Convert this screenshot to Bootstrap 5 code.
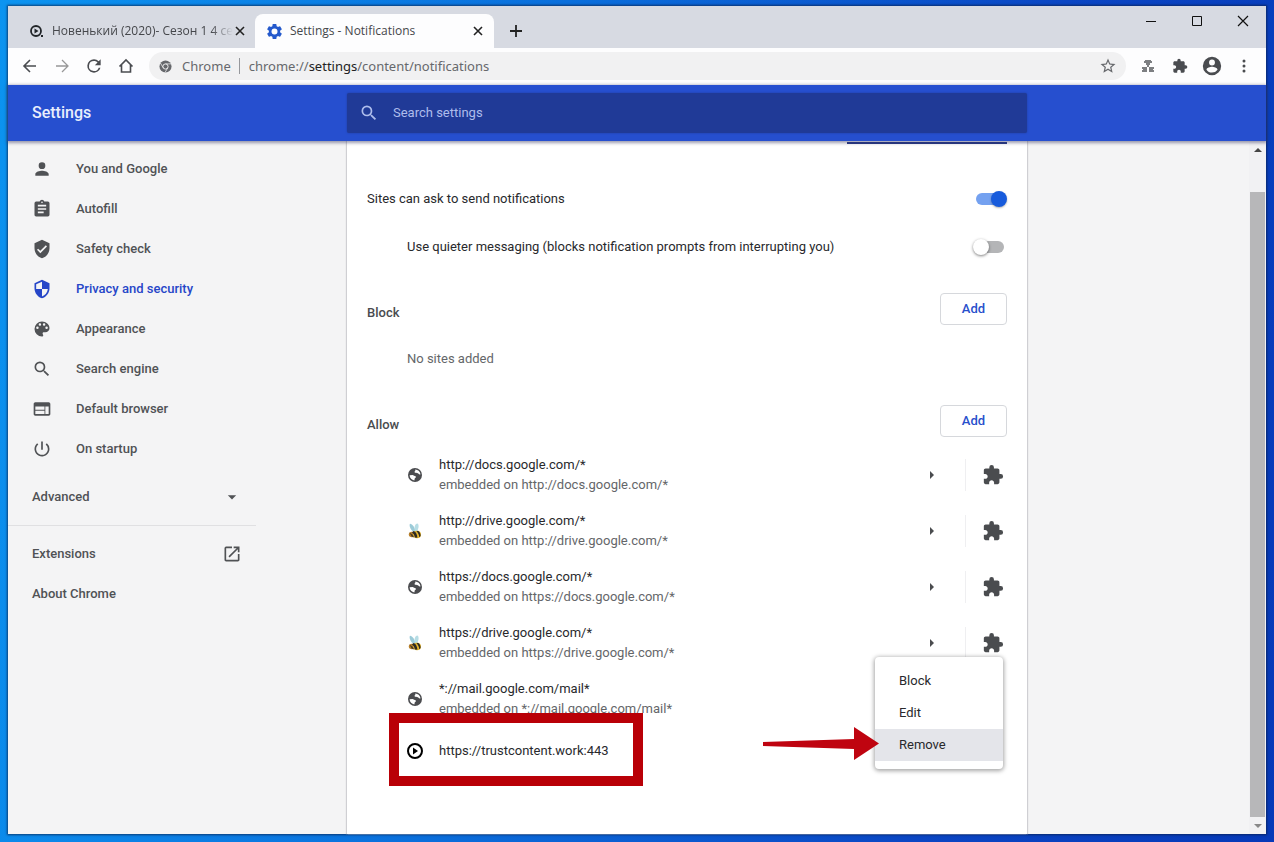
<!DOCTYPE html>
<html lang="en">
<head>
<meta charset="utf-8">
<meta name="viewport" content="width=device-width, initial-scale=1">
<title>Settings - Notifications</title>
<link href="https://cdn.jsdelivr.net/npm/bootstrap@5.3.0/dist/css/bootstrap.min.css" rel="stylesheet">
<style>
body { font-family: Roboto, "Liberation Sans", sans-serif; font-size: 13px; line-height: 20px; color: #28292c; }
.desktop { min-height: 100vh; padding: 6px 8px 8px; background: linear-gradient(100deg, #0c94f0, #0a6fdc 40%, #0b46c4 75%, #0639b8); }
.window { background: #f4f4f5; box-shadow: 0 0 2px 1px rgba(10, 30, 70, .7); }
svg { display: block; fill: currentColor; flex: none; }
button, .plain-link { color: inherit; text-decoration: none; }
.bare { border: 0; background: none; padding: 0; display: flex; align-items: center; justify-content: center; }

/* Tab strip */
.tabstrip { height: 42px; background: #d7dae2; padding: 8px 0 0 14px; }
.browser-tab { height: 34px; font: 12px/18px "Open Sans", "Noto Sans", sans-serif; color: #45474b; }
.browser-tab a { gap: 8px; min-width: 0; }
.tab-idle { width: 233px; padding: 0 9px 0 7px; }
.tab-active { width: 239px; padding: 0 10px 0 12px; background: #fdfdfe; border-radius: 8px 8px 0 0; }
.tab-title { white-space: nowrap; }
.fade-out { -webkit-mask-image: linear-gradient(to right, #000 88%, transparent); mask-image: linear-gradient(to right, #000 88%, transparent); }
.close-btn { width: 12px; height: 12px; color: #222; }
.newtab { width: 28px; height: 28px; margin: 3px 0 0 8px; color: #222; }
.win-btn { width: 46px; height: 30px; margin-top: -8px; color: #111; }

/* Toolbar */
.toolbar { height: 37px; background: #fdfdfe; padding: 0 6px 1px; color: #4a4c50; }
.tool-btn { width: 32px; height: 32px; }
.omnibox { height: 28px; border-radius: 14px; background: #f1f1f2; margin: 0 6px 0 7px; padding: 0 2px 0 10px; font: 13px/20px "Noto Sans", "Open Sans", sans-serif; color: #66686c; min-width: 0; }
.omnibox .site-name { margin-left: 10px; }
.omnibox .sep { width: 1px; height: 16px; background: #96989c; margin: 0 9px 0 8px; }
.omnibox b { font-weight: 400; color: #222; }
.url { white-space: nowrap; overflow: hidden; }

/* Settings header */
.header-bar { background: #264fcf; height: 56px; box-shadow: 0 1px 3px 1px rgba(60, 60, 100, .5); z-index: 2; }
.left-col { flex: 0 0 339px; }
.header-title { font-size: 16px; line-height: 24px; font-weight: 500; color: #e9eefc; padding-left: 24px; }
.main-col { flex: 0 1 680px; min-width: 0; }
.search-box { height: 40px; border-radius: 2px; background: #203a97; color: #aebdec; padding: 0 12px; gap: 14px; box-shadow: 0 0 2px #203a97; }
.search-box input { border: 0; outline: 0; background: none; color: inherit; font-size: 13px; width: 100%; padding: 0; }
.search-box input::placeholder { color: inherit; opacity: 1; }

/* Sidebar */
.side { width: 248px; padding-top: 8px; font-weight: 500; color: #505255; }
.side a, .side .advanced { display: flex; align-items: center; height: 40px; padding: 0 14px 0 24px; color: inherit; text-decoration: none; width: 100%; font-weight: 500; }
.side a.has-icon { gap: 24px; }
.side a.current { color: #2646c8; }
.side .advanced { border: 0; background: none; margin: 8px 0; }
.side .rule { border-top: 1px solid #e0e0e2; margin-bottom: 8px; }

/* Main panel */
.panel { background: #fff; box-shadow: 1px 0 1px #cfcfd3, -1px 0 1px #cfcfd3; padding: 0 20px 48px; }
.field-line { width: 160px; height: 2px; background: #27357c; margin: 1px 0 31px; z-index: 3; }
.setting { height: 48px; padding-right: 3px; }
.indent { padding-left: 40px; }
.toggle { appearance: none; width: 28px; height: 12px; border-radius: 6px; background: #b4b5b7; position: relative; margin: 0; }
.toggle::before { content: ""; position: absolute; top: -2px; left: -3px; width: 16px; height: 16px; border-radius: 50%; background: #fff; box-shadow: 0 1px 3px rgba(0, 0, 0, .5); }
.toggle:checked { background: #74a1f0; }
.toggle:checked::before { left: 15px; background: #175bdc; box-shadow: 0 1px 2px rgba(0, 0, 0, .3); }
.group-head { padding-top: 22px; margin-bottom: 10px; }
.group-head h2 { font-size: 13px; line-height: 24px; font-weight: 500; margin: 0; color: #4a4c4f; }
.add-btn { width: 67px; height: 32px; padding: 0; border: 1px solid #d6d8dc; border-radius: 4px; color: #2850cc; background: #fff; font-size: 13px; font-weight: 500; }
.subtle { color: #646669; }
.site { height: 56px; gap: 16px; }
.site-last { height: 48px; }
.site .vline { width: 1px; height: 32px; background: #efeff1; }
.site .expand { width: 36px; height: 36px; margin-right: -1px; color: #4a4c4f; }
.site .ext { width: 22px; margin-right: 3px; color: #4a4c4f; }
.highlight { position: absolute; left: -18px; top: -14px; bottom: -11px; width: 254px; border: 10px solid #b90007; }
.pointer { position: absolute; right: 128px; top: 0; color: #bf0410; }
.action-menu { position: absolute; right: 4px; bottom: 6px; width: 128px; padding: 8px 0; background: #fff; border-radius: 4px; box-shadow: 0 1px 4px 1px rgba(0, 0, 0, .35); }
.action-menu button { display: block; width: 100%; height: 32px; border: 0; background: none; text-align: left; padding: 0 24px; }
.action-menu button.active { background: #e4e5ea; }

/* Scroll bar */
.scroll { width: 17px; background: #f1f1f3; padding: 0 1px; color: #444; }
.scroll .thumb { background: #b7b7b9; margin-top: 34px; }
.scroll .cap { height: 17px; }
.scroll .cap:last-child { color: #888; }
</style>
</head>
<body>
<svg width="0" height="0" class="position-absolute" aria-hidden="true">
  <symbol id="puzzle" viewBox="0 0 24 24"><path d="M20.500 11H19V7c0-1.100-.9-2-2-2h-4V3.500a2.500 2.500 0 0 0-5 0V5H4c-1.100 0-2 .9-2 2v3.800h1.500c1.500 0 2.700 1.200 2.700 2.700S5 16.200 3.500 16.200H2V20c0 1.100.9 2 2 2h3.800v-1.500c0-1.500 1.200-2.700 2.700-2.700s2.700 1.200 2.700 2.700V22H17c1.100 0 2-.9 2-2v-4h1.500a2.500 2.500 0 0 0 0-5z"/></symbol>
  <symbol id="magnify" viewBox="0 0 24 24"><path d="M15.500 14h-.79l-.28-.27A6.470 6.470 0 0 0 16 9.500 6.500 6.500 0 1 0 9.500 16c1.610 0 3.090-.59 4.230-1.570l.27.280v.79l5 4.990L20.490 19l-4.990-5zm-6 0C7.010 14 5 11.990 5 9.500S7.010 5 9.500 5 14 7.010 14 9.500 11.990 14 9.500 14z"/></symbol>
  <symbol id="globe" viewBox="0 0 16 16"><circle cx="8" cy="8" r="7" fill="#4b4c4f"/><path fill="#fff" d="M8.300 2.600c2.600.1 4.700 2 5.200 4.600-.7.500-1.500.2-1.900-.4-.4-.7-1.300-.4-1.900-.9-.5-.4-1.300.1-1.900-.3-.7-.5-.1-1.200.4-1.500.4-.3-.2-.9.100-1.500zM2.600 8.300l3-.2c.9.100 1.200 1 2.200 1 1 .1 1.400.8 1 1.500-.4.600-1.100.6-1.200 1.300-.1.600 0 1-.3 1.500-2.500-.3-4.600-2.400-4.700-5.100z"/></symbol>
  <symbol id="bee" viewBox="0 0 16 16"><path fill="#9ccbd8" d="M3 .8C1.800 2.800 3.500 6.500 6 8.500L8.300 7.800C7.800 4.500 5.500 1 3 .8z"/><path fill="#b7dde5" d="M10.500.5c-2.300 0-3.500 3.500-2.800 7.500l2.200.2C11.900 5.500 12.200 1.500 10.500.5z"/><ellipse cx="5" cy="11.500" rx="3.200" ry="2.800" fill="#b9802a"/><ellipse cx="10" cy="11.500" rx="4" ry="3.800" fill="#e5b52e"/><path d="M6.500 8c2.500.6 3.800 3.500 3.900 6.800l-2.600-.3C7.700 12.200 6.500 10.500 5 9.500zM11 7.800c1.900 1.200 2.700 3 2.600 5.300l-1.400 1.200c0-2.500-1.100-4.500-2.700-6z" fill="#2d2a24"/><path d="M2.500 9.500L6 12l1 2.500-2.500-1z" fill="#4a3c28"/></symbol>
  <symbol id="x" viewBox="0 0 12 12"><path d="M2 2l8 8M10 2l-8 8" stroke="currentColor" stroke-width="1.600"/></symbol>
  <symbol id="caret-right" viewBox="0 0 8 8"><path d="M2 0l4 4-4 4z"/></symbol>
</svg>

<div class="desktop d-flex">
<div class="window d-flex flex-column flex-fill">

  <div class="tabstrip d-flex">
    <div class="browser-tab tab-idle d-flex align-items-center justify-content-between">
      <a href="#" class="plain-link d-flex align-items-center">
        <svg width="15" height="14" viewBox="0 0 15 14" class="text-dark"><circle cx="7" cy="7" r="5" fill="none" stroke="currentColor" stroke-width="1.800"/><path d="M5.500 4.500l4 2.500-4 2.500zM12 11h2v2h-2z"/></svg>
        <span class="tab-title fade-out">Новенький (2020)- Сезон 1 4 се</span>
      </a>
      <button class="bare close-btn" aria-label="Close tab"><svg width="12" height="12"><use href="#x"/></svg></button>
    </div>
    <div class="browser-tab tab-active d-flex align-items-center justify-content-between">
      <a href="#" class="plain-link d-flex align-items-center">
        <svg width="15" height="15" viewBox="2 2 20 20" fill="#2459cc"><path fill="#2459cc" d="M19.430 12.980c.04-.32.070-.64.070-.98s-.030-.66-.070-.98l2.110-1.650c.19-.15.240-.42.120-.64l-2-3.460c-.12-.22-.39-.3-.61-.22l-2.490 1c-.52-.4-1.080-.73-1.690-.98l-.38-2.650A.488.488 0 0 0 14 2h-4c-.25 0-.46.180-.49.420l-.38 2.650c-.61.250-1.170.590-1.690.980l-2.490-1c-.23-.09-.49 0-.61.220l-2 3.460c-.13.220-.07.490.12.640l2.110 1.650c-.04.320-.07.650-.07.980s.03.660.07.980l-2.110 1.650c-.19.150-.24.420-.12.640l2 3.460c.12.220.39.300.61.220l2.490-1c.52.400 1.080.730 1.690.980l.38 2.650c.03.240.24.420.49.420h4c.25 0 .46-.18.490-.42l.38-2.650c.61-.25 1.170-.59 1.690-.98l2.490 1c.23.090.49 0 .61-.22l2-3.460c.12-.22.070-.49-.12-.64l-2.110-1.650zM12 16a4 4 0 1 1 0-8 4 4 0 0 1 0 8z"/></svg>
        <span class="tab-title">Settings - Notifications</span>
      </a>
      <button class="bare close-btn" aria-label="Close tab"><svg width="12" height="12"><use href="#x"/></svg></button>
    </div>
    <button class="bare newtab" aria-label="New tab"><svg width="14" height="14"><path d="M7 1v12M1 7h12" stroke="currentColor" stroke-width="1.800"/></svg></button>
    <div class="d-flex ms-auto">
      <button class="bare win-btn" aria-label="Minimize"><svg width="12" height="12"><path d="M1 6.500h10" stroke="currentColor"/></svg></button>
      <button class="bare win-btn" aria-label="Maximize"><svg width="12" height="12"><path d="M1.500 1.500h9v9h-9z" fill="none" stroke="currentColor"/></svg></button>
      <button class="bare win-btn" aria-label="Close"><svg width="12" height="12"><path d="M1 1l10 10M11 1L1 11" stroke="currentColor" stroke-width="1.200"/></svg></button>
    </div>
  </div>

  <div class="toolbar d-flex align-items-center">
    <button class="bare tool-btn" aria-label="Back"><svg width="16" height="16" stroke="currentColor" stroke-width="1.600"><path fill="none" d="M14 8H2.500M8 2L2 8l6 6"/></svg></button>
    <button class="bare tool-btn text-black-50" aria-label="Forward"><svg width="16" height="16" stroke="currentColor" stroke-width="1.300" opacity=".8"><path fill="none" d="M2 8h11.500M8 2l6 6-6 6"/></svg></button>
    <button class="bare tool-btn" aria-label="Reload"><svg width="20" height="20" viewBox="0 0 24 24"><path d="M17.650 6.350A7.950 7.950 0 0 0 12 4a8 8 0 1 0 7.730 10h-2.080A6 6 0 1 1 12 6c1.660 0 3.140.69 4.220 1.780L13 11h7V4l-2.350 2.350z"/></svg></button>
    <button class="bare tool-btn" aria-label="Home"><svg width="16" height="16"><path fill="none" stroke="currentColor" stroke-width="1.600" d="M1.500 8.500L8 2l6.500 6.500M3.500 7v7h9V7"/></svg></button>
    <div class="omnibox d-flex align-items-center flex-fill">
      <svg width="13" height="13" viewBox="0 0 14 14"><circle cx="7" cy="7" r="6.500"/><circle cx="7" cy="7" r="2.800" fill="none" stroke="#f1f1f2"/><path d="M7 4.200h6M4.500 8.400L1.500 3.200M9.400 8.400l-3 5.200" stroke="#f1f1f2" stroke-width=".8"/></svg>
      <span class="site-name">Chrome</span><span class="sep"></span>
      <div class="url flex-fill" role="textbox" aria-label="Address" contenteditable="true" spellcheck="false">chrome://<b>settings</b>/content/notifications</div>
      <button class="bare tool-btn" aria-label="Bookmark this page"><svg width="18" height="18" viewBox="0 0 24 24"><path d="M22 9.240l-7.190-.62L12 2 9.190 8.630 2 9.240l5.460 4.730L5.820 21 12 17.270 18.180 21l-1.630-7.030L22 9.240zM12 15.400l-3.760 2.270 1-4.280-3.320-2.880 4.380-.38L12 6.100l1.710 4.040 4.380.38-3.320 2.880 1 4.280L12 15.400z"/></svg></button>
    </div>
    <button class="bare tool-btn" aria-label="Extension"><svg width="14" height="14"><path d="M4 1h6v2H4zM3 2h8v2H3zM5 4h4v2H5zM6 6h2v2H6zM1 8h5v2H1zM8 8h5v2H8zM2 10h4v3H1v-2h1zM8 10h4v1h1v2H8z" fill="#7d7f82"/></svg></button>
    <button class="bare tool-btn" aria-label="Extensions"><svg width="16" height="16"><use href="#puzzle"/></svg></button>
    <button class="bare tool-btn" aria-label="Profile"><svg width="22" height="22" viewBox="0 0 24 24"><path d="M12 2a10 10 0 1 0 0 20 10 10 0 0 0 0-20zm0 3a3.200 3.200 0 1 1 0 6.400A3.200 3.200 0 0 1 12 5zm0 14.200a7.200 7.200 0 0 1-6-3.220c.03-1.990 4-3.080 6-3.080s5.970 1.090 6 3.080a7.200 7.200 0 0 1-6 3.220z"/></svg></button>
    <button class="bare tool-btn" aria-label="Menu"><svg width="4" height="14"><circle cx="2" cy="2" r="1.500"/><circle cx="2" cy="7" r="1.500"/><circle cx="2" cy="12" r="1.500"/></svg></button>
  </div>

  <header class="header-bar d-flex align-items-center position-relative">
    <div class="left-col"><h1 class="header-title m-0">Settings</h1></div>
    <label class="search-box main-col d-flex align-items-center">
      <svg width="20" height="20"><use href="#magnify"/></svg>
      <input type="text" placeholder="Search settings" aria-label="Search settings">
    </label>
  </header>

  <div class="d-flex flex-fill">
    <div class="left-col">
      <nav class="side" aria-label="Settings sections">
        <a href="#" class="has-icon"><svg width="20" height="20" viewBox="0 0 24 24"><path d="M12 12a4 4 0 1 0 0-8 4 4 0 0 0 0 8zm0 2c-2.670 0-8 1.340-8 4v2h16v-2c0-2.660-5.330-4-8-4z"/></svg>You and Google</a>
        <a href="#" class="has-icon"><svg width="20" height="20" viewBox="0 0 24 24"><path d="M19 3h-4.180a3 3 0 0 0-5.640 0H5a2 2 0 0 0-2 2v14c0 1.100.9 2 2 2h14a2 2 0 0 0 2-2V5a2 2 0 0 0-2-2zm-7 0a1 1 0 1 1 0 2 1 1 0 0 1 0-2zm2 14H7v-2h7v2zm3-4H7v-2h10v2zm0-4H7V7h10v2z"/></svg>Autofill</a>
        <a href="#" class="has-icon"><svg width="20" height="20" viewBox="0 0 24 24"><path d="M12 1L3 5v6c0 5.550 3.840 10.740 9 12 5.160-1.260 9-6.450 9-12V5l-9-4zm-2 16l-4-4 1.410-1.410L10 14.170l6.590-6.590L18 9l-8 8z"/></svg>Safety check</a>
        <a href="#" class="has-icon current" aria-current="page"><svg width="20" height="20" viewBox="0 0 24 24"><path d="M12 1L3 5v6c0 5.550 3.840 10.740 9 12 5.160-1.260 9-6.450 9-12V5l-9-4zm0 10.990h7c-.53 4.120-3.280 7.790-7 8.940V12H5V6.300l7-3.110v8.800z"/></svg>Privacy and security</a>
        <a href="#" class="has-icon"><svg width="20" height="20" viewBox="0 0 24 24"><path d="M12 3a9 9 0 0 0 0 18c.83 0 1.500-.67 1.500-1.500 0-.39-.15-.74-.39-1.010-.23-.26-.38-.61-.38-.99 0-.83.67-1.500 1.500-1.500H16a5 5 0 0 0 5-5c0-4.420-4.030-8-9-8zm-5.500 9a1.500 1.500 0 1 1 0-3 1.500 1.500 0 0 1 0 3zm3-4a1.500 1.500 0 1 1 0-3 1.500 1.500 0 0 1 0 3zm5 0a1.500 1.500 0 1 1 0-3 1.500 1.500 0 0 1 0 3zm3 4a1.500 1.500 0 1 1 0-3 1.500 1.500 0 0 1 0 3z"/></svg>Appearance</a>
        <a href="#" class="has-icon"><svg width="20" height="20"><use href="#magnify"/></svg>Search engine</a>
        <a href="#" class="has-icon"><svg width="20" height="20" viewBox="0 0 24 24"><path d="M20 4H4c-1.100 0-1.990.9-1.990 2L2 18c0 1.100.9 2 2 2h16c1.100 0 2-.9 2-2V6c0-1.100-.9-2-2-2zm-5 14H4v-4h11v4zm0-5H4V9h11v4zm5 5h-4V9h4v9z"/></svg>Default browser</a>
        <a href="#" class="has-icon"><svg width="20" height="20" viewBox="0 0 24 24"><path d="M13 3h-2v10h2V3zm4.830 2.170l-1.420 1.420A6.920 6.920 0 0 1 19 12a7 7 0 1 1-11.420-5.420L6.170 5.170A9 9 0 1 0 21 12a8.930 8.930 0 0 0-3.170-6.830z"/></svg>On startup</a>
        <button class="advanced justify-content-between">Advanced<svg width="20" height="20" viewBox="0 0 24 24"><path d="M7 10l5 5 5-5z"/></svg></button>
        <div class="rule"></div>
        <a href="#" class="justify-content-between">Extensions<svg width="20" height="20" viewBox="0 0 24 24"><path d="M19 19H5V5h7V3H5a2 2 0 0 0-2 2v14c0 1.100.89 2 2 2h14c1.100 0 2-.9 2-2v-7h-2v7zM14 3v2h3.590l-9.830 9.830 1.410 1.410L19 6.410V10h2V3h-7z"/></svg></a>
        <a href="#">About Chrome</a>
      </nav>
    </div>

    <main class="panel main-col">
      <div class="d-flex"><div class="field-line ms-auto position-relative"></div></div>
      <div class="setting d-flex align-items-center justify-content-between">
        <label for="ask">Sites can ask to send notifications</label>
        <input class="toggle" type="checkbox" role="switch" id="ask" checked>
      </div>
      <div class="setting indent d-flex align-items-center justify-content-between">
        <label for="quiet">Use quieter messaging (blocks notification prompts from interrupting you)</label>
        <input class="toggle" type="checkbox" role="switch" id="quiet">
      </div>

      <section>
        <div class="group-head d-flex align-items-end justify-content-between"><h2>Block</h2><button class="add-btn">Add</button></div>
        <div class="setting indent subtle d-flex align-items-center">No sites added</div>
      </section>

      <section>
        <div class="group-head d-flex align-items-end justify-content-between"><h2>Allow</h2><button class="add-btn">Add</button></div>
        <div class="indent">
          <div class="site d-flex align-items-center">
            <svg width="16" height="16"><use href="#globe"/></svg>
            <div class="flex-fill"><div>http://docs.google.com/*</div><div class="subtle">embedded on http://docs.google.com/*</div></div>
            <button class="bare expand" aria-label="Site details"><svg width="8" height="8"><use href="#caret-right"/></svg></button>
            <span class="vline"></span><span class="ext"><svg width="22" height="22"><use href="#puzzle"/></svg></span>
          </div>
          <div class="site d-flex align-items-center">
            <svg width="16" height="16"><use href="#bee"/></svg>
            <div class="flex-fill"><div>http://drive.google.com/*</div><div class="subtle">embedded on http://drive.google.com/*</div></div>
            <button class="bare expand" aria-label="Site details"><svg width="8" height="8"><use href="#caret-right"/></svg></button>
            <span class="vline"></span><span class="ext"><svg width="22" height="22"><use href="#puzzle"/></svg></span>
          </div>
          <div class="site d-flex align-items-center">
            <svg width="16" height="16"><use href="#globe"/></svg>
            <div class="flex-fill"><div>https://docs.google.com/*</div><div class="subtle">embedded on https://docs.google.com/*</div></div>
            <button class="bare expand" aria-label="Site details"><svg width="8" height="8"><use href="#caret-right"/></svg></button>
            <span class="vline"></span><span class="ext"><svg width="22" height="22"><use href="#puzzle"/></svg></span>
          </div>
          <div class="site d-flex align-items-center">
            <svg width="16" height="16"><use href="#bee"/></svg>
            <div class="flex-fill"><div>https://drive.google.com/*</div><div class="subtle">embedded on https://drive.google.com/*</div></div>
            <button class="bare expand" aria-label="Site details"><svg width="8" height="8"><use href="#caret-right"/></svg></button>
            <span class="vline"></span><span class="ext"><svg width="22" height="22"><use href="#puzzle"/></svg></span>
          </div>
          <div class="site d-flex align-items-center">
            <svg width="16" height="16"><use href="#globe"/></svg>
            <div class="flex-fill"><div>*://mail.google.com/mail*</div><div class="subtle">embedded on *://mail.google.com/mail*</div></div>
          </div>
          <div class="site site-last d-flex align-items-center position-relative">
            <svg width="16" height="16" viewBox="0 0 16 16"><circle cx="8" cy="8" r="7" fill="none" stroke="#000" stroke-width="2"/><path fill="#000" d="M6 4.500L11 8l-5 3.500z"/></svg>
            <div>https://trustcontent.work:443</div>
            <div class="highlight"></div>
            <div class="action-menu">
              <button>Block</button>
              <button>Edit</button>
              <button class="active">Remove</button>
            </div>
            <svg class="pointer" width="116" height="34" viewBox="0 0 116 34"><path d="M0 15L91 12V0l25 16.500L91 33V22L0 19z"/></svg>
          </div>
        </div>
      </section>
    </main>

    <div class="scroll ms-auto d-flex flex-column" aria-hidden="true">
      <div class="cap d-flex align-items-center justify-content-center"><svg width="8" height="4"><path d="M0 4l4-4 4 4z"/></svg></div>
      <div class="thumb flex-fill"></div>
      <div class="cap d-flex align-items-center justify-content-center"><svg width="8" height="4"><path d="M0 0l4 4 4-4z"/></svg></div>
    </div>
  </div>
</div>
</div>
<script src="https://cdn.jsdelivr.net/npm/bootstrap@5.3.0/dist/js/bootstrap.bundle.min.js"></script>
</body>
</html>
